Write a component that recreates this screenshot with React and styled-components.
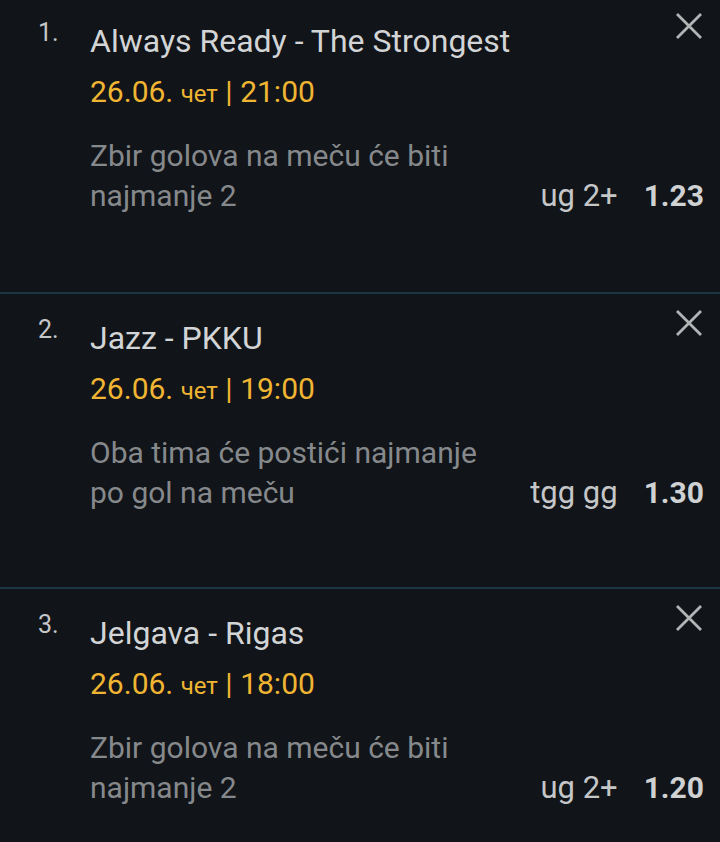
import React from 'react'
import styled, { createGlobalStyle } from 'styled-components'

const GlobalStyle = createGlobalStyle`
  html, body {
    margin: 0;
    padding: 0;
    background: #111418;
  }
  body {
    font-family: Roboto, "Noto Sans", sans-serif;
  }
`

const bets = [
  {
    match: 'Always Ready - The Strongest',
    date: '26.06.',
    day: 'чет',
    time: '21:00',
    tip: ['Zbir golova na meču će biti', 'najmanje 2'],
    market: 'ug 2+',
    odds: '1.23',
  },
  {
    match: 'Jazz - PKKU',
    date: '26.06.',
    day: 'чет',
    time: '19:00',
    tip: ['Oba tima će postići najmanje', 'po gol na meču'],
    market: 'tgg gg',
    odds: '1.30',
  },
  {
    match: 'Jelgava - Rigas',
    date: '26.06.',
    day: 'чет',
    time: '18:00',
    tip: ['Zbir golova na meču će biti', 'najmanje 2'],
    market: 'ug 2+',
    odds: '1.20',
  },
]

const List = styled.div`
  display: flex;
  flex-direction: column;
  width: 720px;
  min-height: 842px;
  background: #111418;
`

const Item = styled.div`
  display: grid;
  grid-template-columns: 52px 1fr 40px;
  padding: ${p => (p.first ? '16px' : '19px')} 16px 0 38px;
  height: ${p => (p.first ? '292px' : '295px')};
  box-sizing: border-box;
  border-top: ${p => (p.first ? 'none' : '2px solid #1b3642')};
`

const Number = styled.div`
  font-size: 25px;
  line-height: 34px;
  color: #c4c6c8;
`

const Body = styled.div`
  display: flex;
  flex-direction: column;
`

const Title = styled.div`
  font-size: 32px;
  line-height: 50px;
  color: #d2d4d6;
`

const DateLine = styled.div`
  font-size: 30px;
  line-height: 52px;
  color: #f0b532;
`

const Day = styled.span`
  font-size: 24px;
`

const TipRow = styled.div`
  display: flex;
  align-items: flex-end;
  justify-content: space-between;
  margin-top: 16px;
`

const Tip = styled.div`
  font-size: 30px;
  line-height: 40px;
  color: #86898c;
`

const Pick = styled.div`
  display: flex;
  align-items: baseline;
  gap: 26px;
  line-height: 40px;
  margin-right: -40px;
`

const Market = styled.span`
  font-size: 31px;
  color: #c4c6c8;
`

const Odds = styled.span`
  font-size: 30px;
  font-weight: 700;
  color: #cfd1d3;
`

const Close = styled.button`
  align-self: start;
  justify-self: end;
  margin-top: -5px;
  width: 30px;
  height: 30px;
  padding: 0;
  border: none;
  background: none;
  display: flex;
  align-items: center;
  justify-content: center;
`

const CloseIcon = () => (
  <svg width="28" height="28" viewBox="0 0 28 28">
    <path d="M2 2 L26 26 M26 2 L2 26" stroke="#b2b4b6" strokeWidth="2.8" strokeLinecap="butt" />
  </svg>
)

const App = () => (
  <List>
    <GlobalStyle />
    {bets.map((bet, i) => (
      <Item key={i} first={i === 0}>
        <Number>{i + 1}.</Number>
        <Body>
          <Title>{bet.match}</Title>
          <DateLine>
            {bet.date} <Day>{bet.day}</Day> | {bet.time}
          </DateLine>
          <TipRow>
            <Tip>
              {bet.tip[0]}
              <br />
              {bet.tip[1]}
            </Tip>
            <Pick>
              <Market>{bet.market}</Market>
              <Odds>{bet.odds}</Odds>
            </Pick>
          </TipRow>
        </Body>
        <Close>
          <CloseIcon />
        </Close>
      </Item>
    ))}
  </List>
)

export default App
